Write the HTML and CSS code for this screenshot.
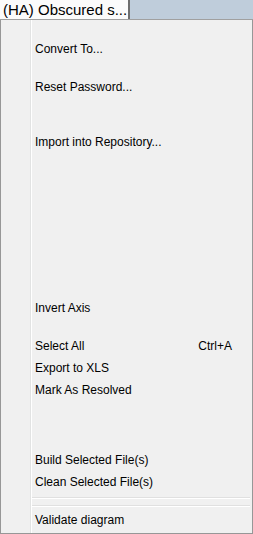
FILE: index.html
```html
<!DOCTYPE html>
<html lang="en">
<head>
    <meta charset="UTF-8">
    <title>Context Menu</title>
    <link rel="stylesheet" href="styles.css">
</head>
<body>
    <div class="tabBar">
        <div class="tab">(HA) Obscured s...</div>
    </div>
    <div class="menu">
        <div class="gap" style="height: 15px"></div>
        <div class="item">Convert To...</div>
        <div class="gap" style="height: 16px"></div>
        <div class="item">Reset Password...</div>
        <div class="gap" style="height: 33px"></div>
        <div class="item">Import into Repository...</div>
        <div class="gap" style="height: 144px"></div>
        <div class="item">Invert Axis</div>
        <div class="gap" style="height: 16px"></div>
        <div class="item"><span>Select All</span><span class="key">Ctrl+A</span></div>
        <div class="item">Export to XLS</div>
        <div class="item">Mark As Resolved</div>
        <div class="gap" style="height: 48px"></div>
        <div class="item">Build Selected File(s)</div>
        <div class="item">Clean Selected File(s)</div>
        <div class="sep"></div>
        <div class="sep"></div>
        <div class="item">Validate diagram</div>
    </div>
</body>
</html>
```

FILE: styles.css
```css
body
{
    margin: 0;
    width: 253px;
    height: 534px;
    overflow: hidden;
    font-family: "Liberation Sans", Arial, sans-serif;
    color: #000;
}
.tabBar
{
    display: flex;
    height: 19px;
    background: #bfcddb;
    border-bottom: 1px solid #a0a0a0;
}
.tab
{
    width: 130px;
    box-sizing: border-box;
    padding-left: 3px;
    background: #fbfbfb;
    border-right: 2px solid #6e6e6e;
    font-size: 15px;
    line-height: 19px;
    white-space: nowrap;
    overflow: hidden;
}
.menu
{
    height: 514px;
    box-sizing: border-box;
    padding: 3px 2px 2px 2px;
    border: 1px solid #979797;
    border-top: none;
    background-color: #f0f0f0;
    background-image: linear-gradient(to right, transparent 29px, #e2e3e3 29px, #e2e3e3 30px, #ffffff 30px, #ffffff 31px, transparent 31px);
    font-size: 12px;
}
.item
{
    display: flex;
    justify-content: space-between;
    height: 22px;
    line-height: 22px;
    padding: 0 18px 0 32px;
    white-space: nowrap;
}
.sep
{
    height: 8px;
    margin-left: 29px;
    box-sizing: border-box;
    padding-top: 4px;
}
.sep::before
{
    content: "";
    display: block;
    height: 1px;
    background: #e0e0e0;
    border-bottom: 1px solid #ffffff;
}
```
